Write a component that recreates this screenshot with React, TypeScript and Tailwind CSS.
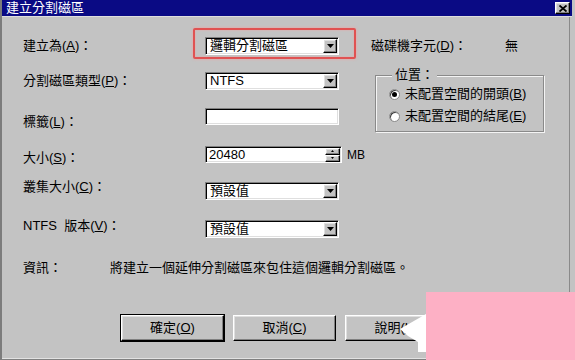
import React from "react";

const raised =
  "bg-[#c3c3c3] border border-t-white border-l-white border-b-black border-r-black shadow-[inset_-1px_-1px_0_#808080,inset_1px_1px_0_#dfdfdf]";

function DropBtn() {
  return (
    <div className={`w-[14px] h-[14px] flex items-center justify-center ${raised}`}>
      <svg width="7" height="4" viewBox="0 0 7 4">
        <polygon points="0,0 7,0 3.5,4" fill="#000" />
      </svg>
    </div>
  );
}

function Combo({ text }: { text: string }) {
  return (
    <div className="w-[134px] h-[18px] bg-white border border-t-[#808080] border-l-[#808080] border-b-white border-r-white shadow-[inset_1px_1px_0_#000,inset_-1px_-1px_0_#dfdfdf] flex items-center pl-[4px] pr-[1px]">
      <span className="flex-1 leading-[16px] whitespace-nowrap">{text}</span>
      <DropBtn />
    </div>
  );
}

function TextBox({ w, children }: { w: string; children?: React.ReactNode }) {
  return (
    <div
      className={`${w} h-[17px] bg-white border border-t-[#808080] border-l-[#808080] border-b-white border-r-white shadow-[inset_1px_1px_0_#000,inset_-1px_-1px_0_#dfdfdf] flex items-center pl-[3px] pr-[1px]`}
    >
      {children}
    </div>
  );
}

function Radio({ checked }: { checked?: boolean }) {
  return (
    <div className="w-[11px] h-[11px] rounded-full bg-white border border-[#8a8a8a] shadow-[inset_1px_1px_0_#404040] flex items-center justify-center">
      {checked && <div className="w-[5px] h-[5px] rounded-full bg-black" />}
    </div>
  );
}

function Btn({ children, def }: { children: React.ReactNode; def?: boolean }) {
  return (
    <div
      className={`w-[103px] h-[26px] flex items-center justify-center ${
        def ? "outline outline-1 outline-black" : ""
      } ${raised}`}
    >
      {children}
    </div>
  );
}

export default function App() {
  return (
    <div className="w-[575px] h-[360px] overflow-hidden relative bg-[#c3c3c3] text-[13px] text-black font-['Liberation_Sans','Noto_Sans_CJK_TC',sans-serif] flex flex-col border-l-2 border-[#7c7c7c] pr-[3px]">
      {/* title bar */}
      <div className="h-[16px] bg-[#0a0a84] flex items-center pl-[4px] pr-[2px] text-white text-[13px] leading-[16px]">
        <span className="flex-1 whitespace-nowrap">建立分割磁區</span>
        <div className={`w-[15px] h-[12px] flex items-center justify-center ${raised}`}>
          <svg width="8" height="7" viewBox="0 0 8 7">
            <path d="M0.5 0.5 L7.5 6.5 M7.5 0.5 L0.5 6.5" stroke="#000" strokeWidth="1.8" />
          </svg>
        </div>
      </div>
      <div className="h-[1px] bg-[#dedede]" />

      {/* body */}
      <div className="flex-1 flex flex-col pl-[21px] mr-[2px] border-r border-[#8a8a8a]">
        <div className="flex">
          {/* left column */}
          <div className="w-[348px] flex flex-col">
            <div className="mt-[20px] h-[18px] flex items-center">
              <span className="w-[182px] leading-[18px]">建立為(<u>A</u>)：</span>
              <div className="relative">
                <Combo text="邏輯分割磁區" />
                <div className="absolute -left-[12px] -top-[9px] w-[163px] h-[31px] border-2 border-[#e05252] rounded-[2px] shadow-[0_0_3px_#f2a0a0,inset_0_0_2px_#f2a0a0]" />
              </div>
            </div>
            <div className="mt-[17px] h-[18px] flex items-center">
              <span className="w-[182px] leading-[18px]">分割磁區類型(<u>P</u>)：</span>
              <Combo text="NTFS" />
            </div>
            <div className="mt-[18px] h-[17px] flex items-center">
              <span className="w-[182px] leading-[18px] mt-[11px]">標籤(<u>L</u>)：</span>
              <TextBox w="w-[134px]" />
            </div>
            <div className="mt-[21px] h-[17px] flex items-center">
              <span className="w-[182px] leading-[18px] mt-[7px]">大小(<u>S</u>)：</span>
              <TextBox w="w-[137px]">
                <span className="flex-1 leading-[15px]">20480</span>
                <div className="flex flex-col">
                  <div className={`w-[15px] h-[7px] flex items-center justify-center ${raised}`}>
                    <svg width="3" height="2" viewBox="0 0 3 2">
                      <polygon points="1.5,0 3,2 0,2" fill="#000" />
                    </svg>
                  </div>
                  <div className={`w-[15px] h-[7px] flex items-center justify-center ${raised}`}>
                    <svg width="3" height="2" viewBox="0 0 3 2">
                      <polygon points="0,0 3,0 1.5,2" fill="#000" />
                    </svg>
                  </div>
                </div>
              </TextBox>
              <span className="ml-[5px] text-[12px]">MB</span>
            </div>
            <div className="mt-[19px] h-[18px] flex items-center">
              <span className="w-[182px] leading-[18px] -mt-[8px]">叢集大小(<u>C</u>)：</span>
              <Combo text="預設值" />
            </div>
            <div className="mt-[20px] h-[18px] flex items-center">
              <span className="w-[182px] leading-[18px] -mt-[6px] whitespace-nowrap">NTFS&nbsp;&nbsp;版本(<u>V</u>)：</span>
              <Combo text="預設值" />
            </div>
          </div>

          {/* right column */}
          <div className="flex flex-col">
            <div className="mt-[20px] h-[18px] flex items-center">
              <span className="w-[134px] leading-[18px] whitespace-nowrap">磁碟機字元(<u>D</u>)：</span>
              <span>無</span>
            </div>
            <div className="relative mt-[20px] ml-[4px] w-[169px] h-[57px] border border-[#8a8a8a] shadow-[1px_1px_0_#f4f4f4,inset_1px_1px_0_#f4f4f4] flex flex-col pl-[13px]">
              <span className="absolute left-[16px] -top-[9px] px-[3px] bg-[#c3c3c3] leading-[16px]">位置：</span>
              <div className="mt-[11px] h-[14px] flex items-center gap-[5px]">
                <Radio checked />
                <span className="whitespace-nowrap">未配置空間的開頭(<u>B</u>)</span>
              </div>
              <div className="mt-[8px] h-[14px] flex items-center gap-[5px]">
                <Radio />
                <span className="whitespace-nowrap">未配置空間的結尾(<u>E</u>)</span>
              </div>
            </div>
          </div>
        </div>

        <div className="mt-[21px] h-[18px] flex items-center">
          <span className="w-[87px]">資訊：</span>
          <span className="whitespace-nowrap">將建立一個延伸分割磁區來包住這個邏輯分割磁區。</span>
        </div>

        <div className="mt-[38px] flex gap-[9px] pl-[98px]">
          <Btn def>
            確定(<u>O</u>)
          </Btn>
          <Btn>
            取消(<u>C</u>)
          </Btn>
          <Btn>
            說明(<u>H</u>)
          </Btn>
        </div>
      </div>
      <div className="h-[2px] bg-[#e2e2e2] border-b border-[#808080]" />

      {/* pointer arrow and pink overlay */}
      <svg className="absolute left-[396px] top-[312px]" width="30" height="42" viewBox="0 0 30 42">
        <polygon points="2,17 28,2 28,40 20,40 20,30 10,24" fill="#fff" />
      </svg>
      <div className="absolute left-[424px] top-[292px] right-0 bottom-0 bg-[#fdb0c5]" />
    </div>
  );
}
